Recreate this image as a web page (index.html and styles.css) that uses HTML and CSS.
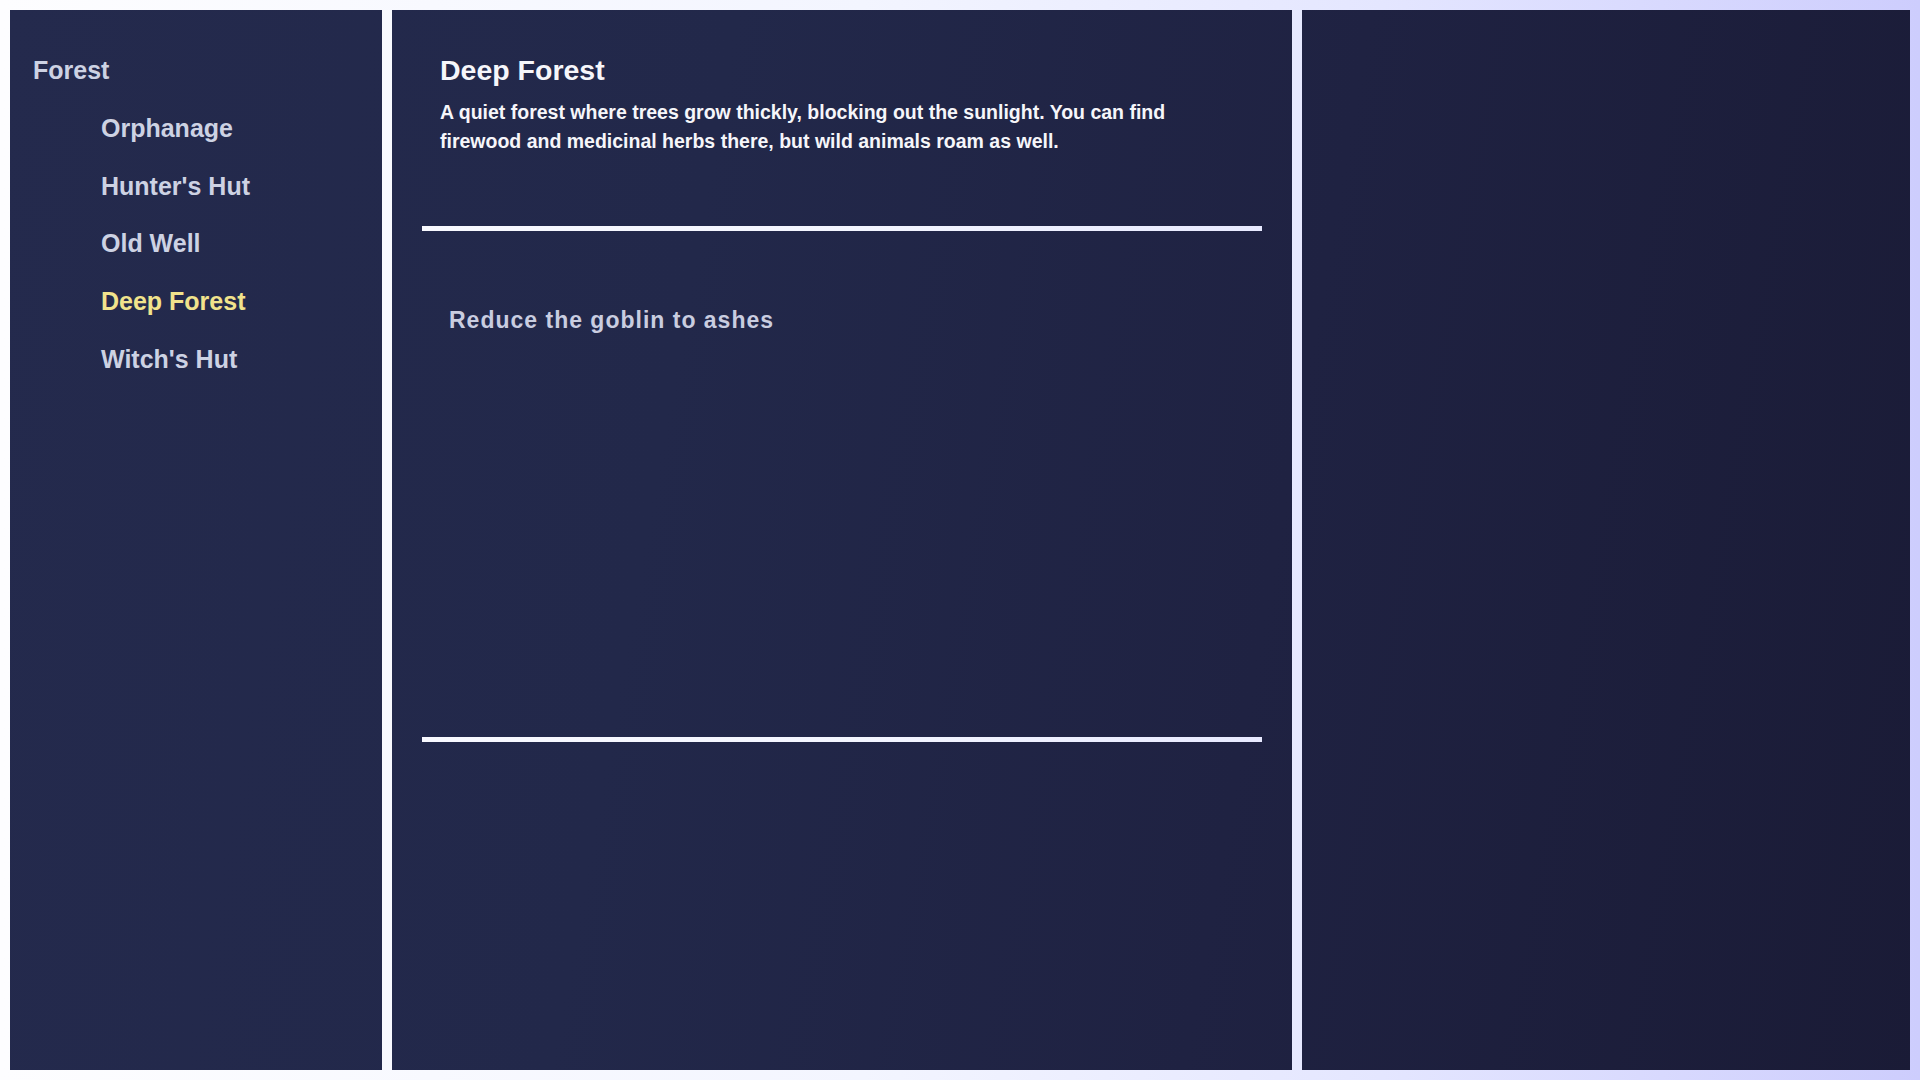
FILE: index.html
```html
<!DOCTYPE html>
<html lang="en">
<head>
<meta charset="utf-8">
<title>Deep Forest</title>
<link rel="stylesheet" href="styles.css">
</head>
<body>
<div class="app">
  <nav class="panel side">
    <div class="region">Forest</div>
    <ul class="places">
      <li class="place">Orphanage</li>
      <li class="place">Hunter's Hut</li>
      <li class="place">Old Well</li>
      <li class="place active">Deep Forest</li>
      <li class="place">Witch's Hut</li>
    </ul>
  </nav>
  <main class="panel detail">
    <header class="info">
      <h1 class="title">Deep Forest</h1>
      <p class="desc">A quiet forest where trees grow thickly, blocking out the sunlight. You can find firewood and medicinal herbs there, but wild animals roam as well.</p>
    </header>
    <div class="rule"></div>
    <section class="actions">
      <div class="action">Reduce the goblin to ashes</div>
    </section>
    <div class="rule"></div>
  </main>
  <aside class="panel extra"></aside>
</div>
</body>
</html>
```

FILE: styles.css
```css
* { box-sizing: border-box; }

html, body {
  margin: 0;
  height: 100%;
}

body {
  font-family: "Liberation Sans", Arial, sans-serif;
  font-weight: 700;
  background: linear-gradient(90deg, #fdfdff 0%, #f3f5ff 45%, #e4e6ff 72%, #cdcdfd 100%) fixed;
  padding: 10px;
}

.app {
  display: grid;
  grid-template-columns: 372px 900px 1fr;
  gap: 10px;
  height: 1060px;
}

.panel {
  background: linear-gradient(100deg, #242a4d 0%, #22284a 35%, #1f2242 65%, #1a1b36 100%) fixed;
}

/* left navigation */
.side {
  padding: 45px 23px;
}

.region {
  font-size: 25px;
  line-height: 30px;
  color: #cdd2e3;
}

.places {
  list-style: none;
  margin: 28px 0 0;
  padding: 0 0 0 68px;
  display: flex;
  flex-direction: column;
  gap: 27.7px;
}

.place {
  font-size: 25px;
  line-height: 30px;
  color: #cdd2e3;
}

.place.active {
  color: #f1e38c;
}

/* middle detail */
.detail {
  padding: 44px 30px 0;
  display: flex;
  flex-direction: column;
}

.info {
  padding: 0 18px;
  height: 172px;
}

.title {
  margin: 0;
  font-size: 28.5px;
  line-height: 32px;
  color: #f6f6fa;
  font-weight: 700;
}

.desc {
  margin: 12px 0 0;
  font-size: 19.5px;
  line-height: 29px;
  color: #f6f6fa;
  max-width: 760px;
}

.rule {
  height: 5px;
  background: linear-gradient(90deg, #fdfdff 0%, #f3f5ff 45%, #e4e6ff 72%, #cdcdfd 100%) fixed;
}

.actions {
  height: 506px;
  padding: 75px 27px 0;
}

.action {
  font-size: 23px;
  line-height: 28px;
  letter-spacing: 1px;
  color: #c9cde0;
}
```
